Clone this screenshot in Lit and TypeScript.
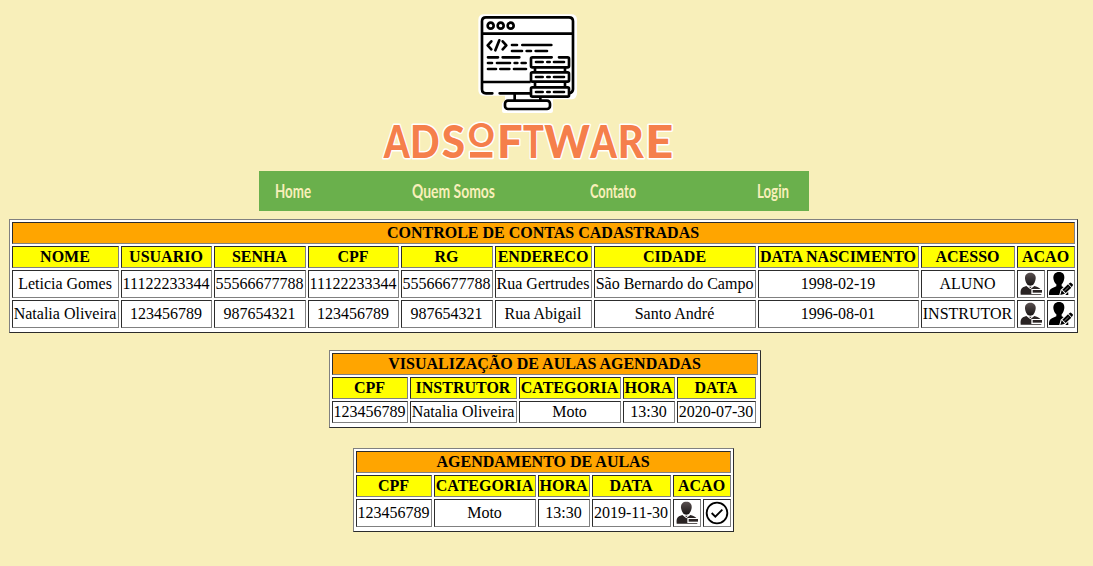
import { LitElement, html, svg, css } from "lit";
import { customElement, property } from "lit/decorators.js";

type Action = "remove" | "edit" | "confirm";

const ICONS: Record<Action, unknown> = {
  remove: svg`
    <defs><linearGradient id="g" x1="0" y1="0" x2="0" y2="1"><stop offset="0" stop-color="#5a5050"/><stop offset="1" stop-color="#181414"/></linearGradient></defs>
    <path fill="url(#g)" d="M34 2c11 0 17 7 16 18-1 9-5 16-10 20-4 2-8 2-12 0-5-4-9-11-10-20C17 9 23 2 34 2z"/>
    <path fill="#292323" d="M22 42l12 10 12-10c11 3 18 6 20 13l1 13H5c-1-12 0-18 7-22z"/>
    <path fill="#393131" d="M30 44h8l-4 5z"/>
    <path fill="#fff" d="M37 51h35v15H37z"/>
    <path fill="#2b2525" d="M41 54h28v8H41z"/>`,
  edit: svg`
    <path d="M30 0c11 0 17 7 16 18-1 9-4 15-8 19v6l12 5c6 3 8 8 8 21H0c0-12 2-17 9-20l13-6v-6c-5-4-8-10-9-19C13 7 19 0 30 0z"/>
    <path fill="#fff" d="M30 72l5-19 27-24 12 12-28 31z"/>
    <path d="M34 69l4-14 10 10zM40 53l17-16 10 10-17 16zM59 35l4-3q2-1 4 1l4 4q2 2 0 4l-3 4z"/>
    <path stroke="#fff" stroke-width="1.5" d="M46 57l13-12"/>`,
  confirm: svg`
    <circle cx="36" cy="36" r="31" fill="none" stroke="#000" stroke-width="5.5"/>
    <path d="M20 36l11 11 21-21" fill="none" stroke="#000" stroke-width="5.5"/>`,
};

@customElement("action-icon")
class ActionIcon extends LitElement {
  @property() kind: Action = "remove";
  static styles = css`
    :host { display: block; width: 24px; height: 24px; }
    svg { display: block; }
  `;
  render() {
    return html`<svg width="24" height="24" viewBox="0 0 72 72">${ICONS[this.kind]}</svg>`;
  }
}

@customElement("data-table")
class DataTable extends LitElement {
  @property() heading = "";
  @property({ attribute: false }) columns: string[] = [];
  @property({ attribute: false }) widths: number[] = [];
  @property({ attribute: false }) rows: string[][] = [];
  @property({ attribute: false }) actions: Action[] = [];

  static styles = css`
    :host { display: block; width: max-content; }
    table {
      table-layout: fixed;
      border: 1px solid;
      border-color: #808080 #2c2c2c #2c2c2c #808080;
      border-spacing: 2px;
      border-collapse: separate;
      background: #fff;
      color: #000;
      font: 16px "Liberation Serif", serif;
      text-align: center;
      white-space: nowrap;
    }
    th, td {
      border: 1px solid;
      border-color: #2c2c2c #808080 #808080 #2c2c2c;
      padding: 1px 1.5px 1px 0.5px;
      line-height: 18px;
    }
    th { background: #ff0; font-weight: bold; }
    .heading { background: orange; }
    .action { padding: 1px; }
  `;

  render() {
    const total = this.widths.reduce((a, b) => a + b + 2, 4);
    return html`<table style="width:${total}px">
      <colgroup>${this.widths.map((w) => html`<col style="width:${w}px">`)}</colgroup>
      <tr><th class="heading" colspan=${this.widths.length}>${this.heading}</th></tr>
      <tr>
        ${this.columns.map((c) => html`<th>${c}</th>`)}
        ${this.actions.length ? html`<th colspan=${this.actions.length}>ACAO</th>` : ""}
      </tr>
      ${this.rows.map((r) => html`<tr>
        ${r.map((v) => html`<td>${v}</td>`)}
        ${this.actions.map((a) => html`<td class="action"><action-icon kind=${a}></action-icon></td>`)}
      </tr>`)}
      <tr></tr>
    </table>`;
  }
}

const LETTERS: [string, number, number][] = [
  ["A", 26, 78], ["D", 105, 89], ["S", 200, 70], ["F", 366, 77], ["T", 444, 63],
  ["W", 508, 137], ["A", 646, 80], ["R", 728, 78], ["E", 811, 84],
];

@customElement("brand-logo")
class BrandLogo extends LitElement {
  static styles = css`
    :host { display: block; width: 310px; height: 160px; }
    svg { display: block; overflow: visible; }
    .word { font-family: Lato, sans-serif; font-weight: 900; font-size: 139px; fill: #f57f4b; stroke: #fff; stroke-width: 9px; paint-order: stroke; stroke-linejoin: round; }
    .small { font-size: 94px; }
    .line { fill: none; stroke: #000; stroke-width: 8px; stroke-linecap: round; stroke-linejoin: round; }
  `;
  render() {
    return html`<svg width="310" height="160" viewBox="0 0 310 160">
      <g transform="translate(95 0) scale(.33333)">
        <path fill="#fff" d="M42 28h262q17 0 17 17v218q0 17-15 20h-57v35q0 6-7 6H102q-6 0-6-6v-23l9-9v-14H42q-17 0-17-17V45q0-17 17-17z"/>
        <g class="line">
          <path d="M67 265H48q-12 0-12-12V49q0-12 12-12h249q12 0 12 12v204q0 10-12 12M89 265h93M36 86h273M36 231h146M134 267v18M211 278v8"/>
          <rect x="105" y="287" width="135" height="25" rx="9"/>
          <circle cx="62" cy="62" r="9"/><circle cx="92" cy="62" r="9"/><circle cx="122" cy="62" r="9"/>
          <path d="M64 109L53 121l11 12M88 106l-12 30M98 109l11 12-11 12"/>
          <path d="M126 120h15M157 120h87M126 138h30M170 138h13M197 138h34M54 157h30M98 157h50M54 174h12M81 174h39M134 174h8M155 174h12M54 192h24M91 192h27M132 192h36"/>
          <path fill="#fff" stroke="none" d="M182 157h116v118H182z"/>
          <path d="M245 157h-58q-4 0-4 4v22q0 4 4 4h106q4 0 4-4v-22q0-4-4-4h-26M195 189v10M285 189v10M195 233v12M285 233v12"/>
          <rect x="183" y="202" width="114" height="28" rx="4"/>
          <rect x="183" y="247" width="114" height="28" rx="4"/>
          <path d="M198 171h20M232 171h7M252 171h30M198 216h20M232 216h7M252 216h30M198 261h20M232 261h7M252 261h30"/>
        </g>
      </g>
      <g class="word" transform="translate(0 107) scale(.33333)">
        ${LETTERS.slice(0, 3).map(([c, x, w]) => svg`<text x=${x} y="137" textLength=${w} lengthAdjust="spacingAndGlyphs">${c}</text>`)}
        <text class="small" x="279" y="106" textLength="80" lengthAdjust="spacingAndGlyphs">O</text>
        <rect x="285" y="120" width="67" height="17"/>
        ${LETTERS.slice(3).map(([c, x, w]) => svg`<text x=${x} y="137" textLength=${w} lengthAdjust="spacingAndGlyphs">${c}</text>`)}
      </g>
    </svg>`;
  }
}

const LINKS: [string, number][] = [["Home", 36], ["Quem Somos", 83], ["Contato", 46], ["Login", 32]];

@customElement("app-root")
class AppRoot extends LitElement {
  static styles = css`
    :host { display: block; box-sizing: border-box; height: 566px; padding-top: 5px; background: #f8efba; overflow: hidden; }
    .logo { margin-left: 375px; }
    nav { display: grid; grid-template-columns: 137px 178px 167px auto; box-sizing: border-box; width: 550px; height: 40px; margin: 6px 0 8px 259px; padding-left: 16px; background: #6ab04c; }
    .link { display: block; height: 40px; overflow: visible; fill: #f8efba; font: 700 18px Lato, sans-serif; }
    .accounts { margin-left: 9px; }
    .scheduled { margin: 17px 0 0 329px; }
    .booking { margin: 20px 0 0 353px; }
  `;
  render() {
    return html`
      <brand-logo class="logo"></brand-logo>
      <nav>
        ${LINKS.map(([t, w]) => html`<svg class="link" width=${w} height="40"><text x="0" y="27" textLength=${w} lengthAdjust="spacingAndGlyphs">${t}</text></svg>`)}
      </nav>
      <data-table class="accounts" heading="CONTROLE DE CONTAS CADASTRADAS"
        .columns=${["NOME", "USUARIO", "SENHA", "CPF", "RG", "ENDERECO", "CIDADE", "DATA NASCIMENTO", "ACESSO"]}
        .widths=${[107, 91, 92, 91, 92, 97, 162, 161, 94, 28, 28]}
        .actions=${["remove", "edit"]}
        .rows=${[
          ["Leticia Gomes", "11122233344", "55566677788", "11122233344", "55566677788", "Rua Gertrudes", "São Bernardo do Campo", "1998-02-19", "ALUNO"],
          ["Natalia Oliveira", "123456789", "987654321", "123456789", "987654321", "Rua Abigail", "Santo André", "1996-08-01", "INSTRUTOR"],
        ]}></data-table>
      <data-table class="scheduled" heading="VISUALIZAÇÃO DE AULAS AGENDADAS"
        .columns=${["CPF", "INSTRUTOR", "CATEGORIA", "HORA", "DATA"]}
        .widths=${[76, 107, 102, 52, 79, 0]}
        .rows=${[["123456789", "Natalia Oliveira", "Moto", "13:30", "2020-07-30"]]}></data-table>
      <data-table class="booking" heading="AGENDAMENTO DE AULAS"
        .columns=${["CPF", "CATEGORIA", "HORA", "DATA"]}
        .widths=${[76, 102, 52, 79, 28, 28]}
        .actions=${["remove", "confirm"]}
        .rows=${[["123456789", "Moto", "13:30", "2019-11-30"]]}></data-table>
    `;
  }
}
